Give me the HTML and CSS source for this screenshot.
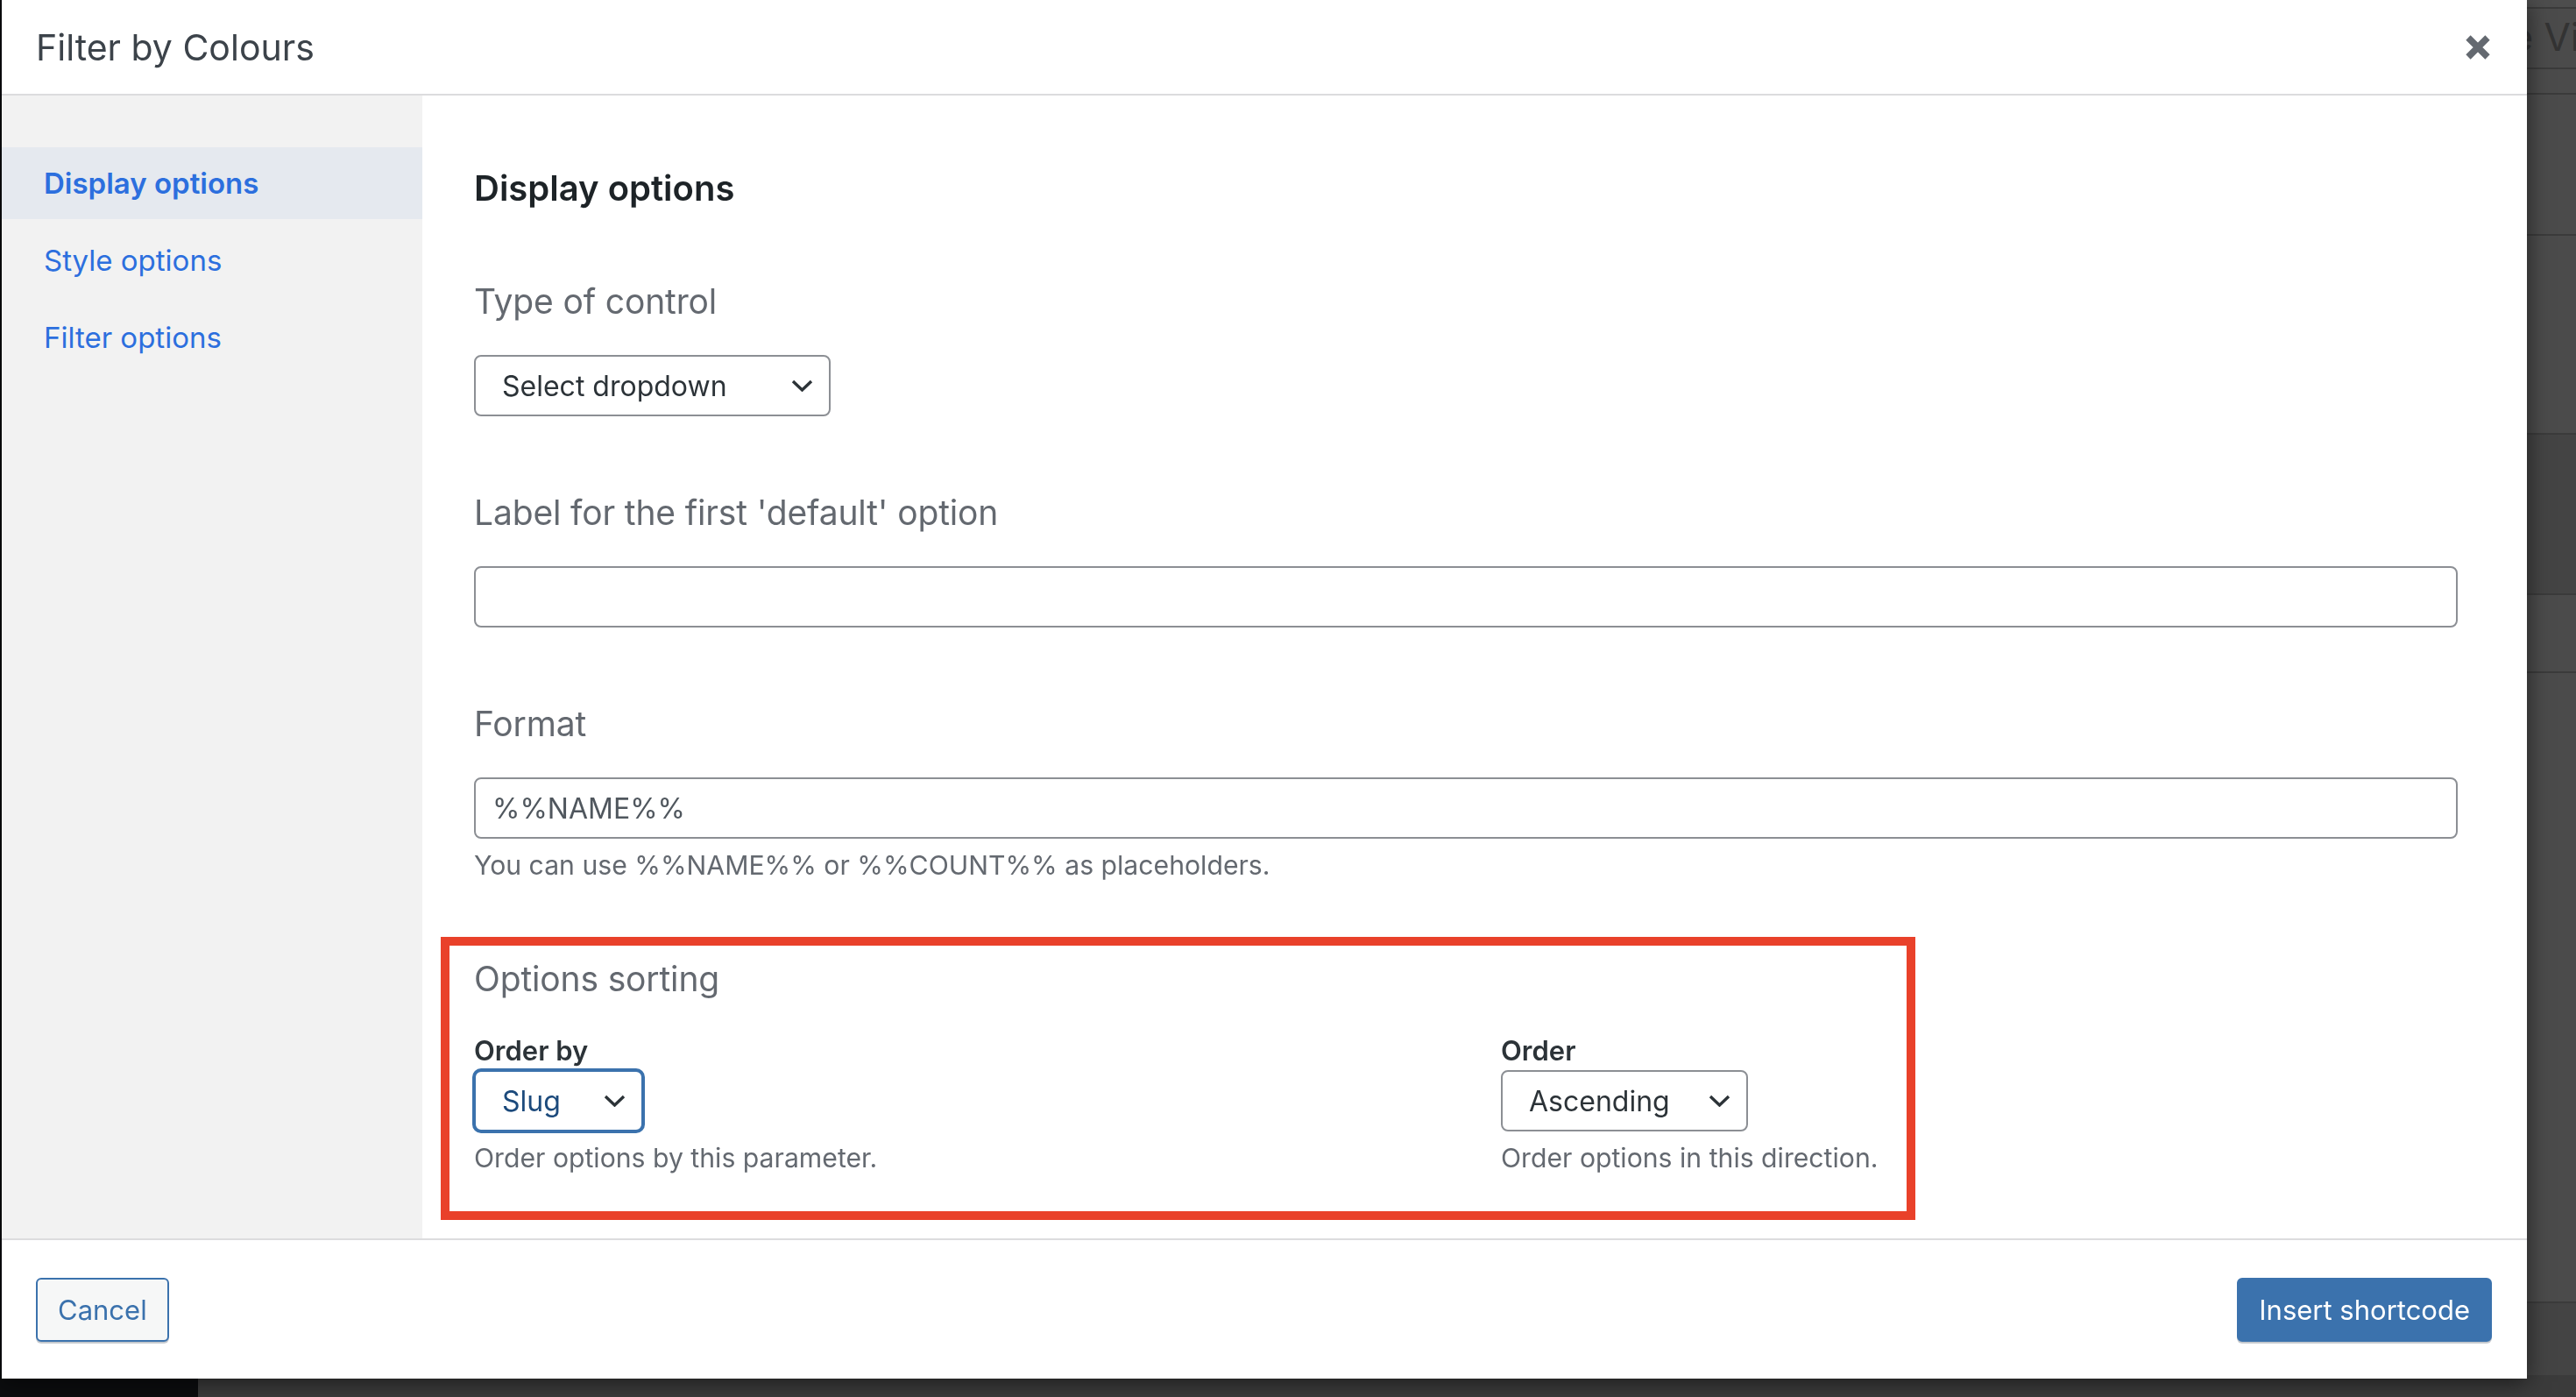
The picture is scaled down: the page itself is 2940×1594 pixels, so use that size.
FILE: index.html
```html
<!DOCTYPE html>
<html lang="en">
<head>
<meta charset="UTF-8">
<meta name="viewport" content="width=device-width, initial-scale=1.0">
<title>Filter by Colours</title>
<link rel="stylesheet" href="styles.css">
</head>
<body>

<!-- admin page behind the dialog -->
<div class="backdrop">
  <div class="admin-menu"></div>
  <div class="admin-page">
    <div class="row row-top"></div>
    <div class="row row-title"><span>Live View</span></div>
    <div class="row row-tabs"></div>
    <div class="row row-a"></div>
    <div class="row row-b"></div>
    <div class="row row-c"></div>
    <div class="row row-d"></div>
    <div class="row row-fill"></div>
    <div class="row row-foot"></div>
    <div class="row row-end"></div>
  </div>
</div>

<div class="modal" role="dialog">
  <header class="modal-header">
    <h1>Filter by Colours</h1>
    <button class="close" title="Close">
      <svg width="28" height="28" viewBox="0 0 28 28"><path d="M3 3 L25 25 M25 3 L3 25" stroke="#646970" stroke-width="7.5" fill="none"/></svg>
    </button>
  </header>

  <div class="modal-body">
    <nav class="sidebar">
      <a class="active" href="#display">Display options</a>
      <a href="#style">Style options</a>
      <a href="#filter">Filter options</a>
    </nav>

    <main class="panel">
      <h2>Display options</h2>

      <label class="field-label">Type of control</label>
      <div class="select select-type">
        <span>Select dropdown</span>
        <svg class="chevron" width="25" height="14" viewBox="0 0 25 14"><polyline points="2,2 12.5,12 23,2" fill="none" stroke="#2c3338" stroke-width="3.4"/></svg>
      </div>

      <label class="field-label spaced">Label for the first 'default' option</label>
      <input class="text-input" type="text" value="">

      <label class="field-label spaced">Format</label>
      <input class="text-input" type="text" value="%%NAME%%">
      <p class="help">You can use %%NAME%% or %%COUNT%% as placeholders.</p>

      <div class="sorting">
        <div class="field-label">Options sorting</div>
        <div class="sorting-grid">
          <div>
            <div class="small-label">Order by</div>
            <div class="select select-slug focused">
              <span>Slug</span>
              <svg class="chevron" width="25" height="14" viewBox="0 0 25 14"><polyline points="2,2 12.5,12 23,2" fill="none" stroke="#2c3338" stroke-width="3.4"/></svg>
            </div>
            <p class="help tight">Order options by this parameter.</p>
          </div>
          <div>
            <div class="small-label">Order</div>
            <div class="select select-order">
              <span>Ascending</span>
              <svg class="chevron" width="25" height="14" viewBox="0 0 25 14"><polyline points="2,2 12.5,12 23,2" fill="none" stroke="#2c3338" stroke-width="3.4"/></svg>
            </div>
            <p class="help tight">Order options in this direction.</p>
          </div>
        </div>
      </div>
    </main>
  </div>

  <footer class="modal-footer">
    <button class="btn btn-secondary">Cancel</button>
    <button class="btn btn-primary">Insert shortcode</button>
  </footer>
</div>

</body>
</html>
```

FILE: styles.css
```css
*, *::before, *::after {
    box-sizing: border-box;
}
html, body {
    margin: 0;
    height: 100%;
}
body {
    font-family: Inter, "Noto Sans", "Liberation Sans", sans-serif;
    background: #4b4b4b;
    overflow: hidden;
}

/* dimmed admin page */
.backdrop {
    display: grid;
    grid-template-columns: 226px 1fr;
    height: 100vh;
}
.admin-menu {
    background: #0c0d0f;
}
.admin-page {
    display: flex;
    flex-direction: column;
    background: #4b4b4b;
}
.row {
    border-bottom: 2px solid #3b3b3b;
}
.row-top { height: 10px; background: #4d4d4d; }
.row-title {
    height: 69px;
    padding-left: 2580px;
    font-size: 44px;
    line-height: 64px;
    color: #333;
    white-space: nowrap;
    overflow: hidden;
}
.row-tabs { height: 29px; }
.row-a { height: 161px; }
.row-b { height: 227px; }
.row-c { height: 183px; background: #444; }
.row-d { height: 89px; }
.row-fill { height: 717px; border-bottom: none; }
.row-foot { height: 86px; background: #444; border-top: 2px solid #3b3b3b; }
.row-end { flex: 1; background: #3b3b3b; border-bottom: none; }

/* dialog */
.modal {
    position: fixed;
    top: 0;
    left: 2px;
    width: 2882px;
    height: 1573px;
    background: #fff;
    display: flex;
    flex-direction: column;
    box-shadow: 0 4px 24px rgba(0, 0, 0, 0.55);
}
.modal-header {
    height: 109px;
    flex-shrink: 0;
    display: flex;
    align-items: center;
    justify-content: space-between;
    padding: 0 42px 0 39px;
    border-bottom: 2px solid #dcdcde;
}
.modal-header h1 {
    margin: 0;
    font-size: 41px;
    font-weight: 400;
    line-height: 48px;
    color: #3c434a;
}
.close {
    border: none;
    background: none;
    padding: 0;
    width: 28px;
    height: 28px;
    cursor: pointer;
}
.close svg {
    display: block;
}

.modal-body {
    flex: 1;
    display: flex;
    min-height: 0;
}
.sidebar {
    width: 480px;
    flex-shrink: 0;
    background: #f2f2f2;
    padding-top: 59px;
}
.sidebar a {
    display: block;
    height: 82px;
    margin-bottom: 6px;
    padding-left: 48px;
    font-size: 33px;
    line-height: 82px;
    color: #2c6fde;
    text-decoration: none;
}
.sidebar a.active {
    background: #e5e9ef;
    font-weight: 600;
}

.panel {
    flex: 1;
    padding: 82px 79px 0 59px;
    overflow: hidden;
}
.panel h2 {
    margin: 0;
    font-size: 40px;
    font-weight: 600;
    line-height: 48px;
    color: #1d2327;
}
.field-label {
    display: block;
    margin: 81px 0 37px;
    font-size: 39px;
    letter-spacing: -0.15px;
    line-height: 48px;
    color: #646970;
}
.field-label.spaced {
    margin-top: 86px;
}

.select {
    display: flex;
    align-items: center;
    justify-content: space-between;
    height: 70px;
    padding: 0 18px 0 30px;
    border: 2px solid #8c8f94;
    border-radius: 8px;
    font-size: 32px;
    color: #2c3338;
    background: #fff;
}
.select-type { width: 407px; }
.select-slug { width: 193px; }
.select-order { width: 282px; }
.select.focused {
    border-color: #3b72ad;
    box-shadow: 0 0 0 2px #3b72ad;
    color: #1c4a7c;
}
.chevron {
    display: block;
    flex-shrink: 0;
}

.text-input {
    display: block;
    width: 100%;
    height: 70px;
    padding: 0 19px;
    border: 2px solid #8c8f94;
    border-radius: 8px;
    font-family: inherit;
    font-size: 32px;
    color: #50575e;
    background: #fff;
}

.help {
    margin: 12px 0 0;
    font-size: 30.2px;
    line-height: 36px;
    color: #646970;
}

/* sorting block, marked with a red frame */
.sorting {
    position: relative;
    margin-top: 74px;
    padding: 14px 0 43px;
}
.sorting::before {
    content: "";
    position: absolute;
    top: -10px;
    bottom: -10px;
    left: -38px;
    width: 1683px;
    border: 10px solid #e9412a;
    pointer-events: none;
}
.sorting .field-label {
    margin: 0 0 40px;
}
.sorting-grid {
    display: grid;
    grid-template-columns: 1fr 1fr;
    column-gap: 80px;
}
.small-label {
    font-size: 31px;
    font-weight: 600;
    line-height: 36px;
    color: #2c3338;
    margin-bottom: 4px;
}
.help.tight {
    margin-top: 12px;
}

.modal-footer {
    height: 160px;
    flex-shrink: 0;
    display: flex;
    align-items: center;
    justify-content: space-between;
    padding: 0 40px 0 39px;
    border-top: 2px solid #dcdcde;
}
.btn {
    height: 73px;
    padding: 0 23px;
    border-radius: 6px;
    font-family: inherit;
    font-size: 31px;
    cursor: pointer;
    box-shadow: 0 2px 0 #c5c9ce;
}
.btn-secondary {
    border: 2px solid #3b72ad;
    background: #f6f7f7;
    color: #3b72ad;
}
.btn-primary {
    border: 2px solid #3b72ad;
    background: #3b72ad;
    color: #fff;
}
```
